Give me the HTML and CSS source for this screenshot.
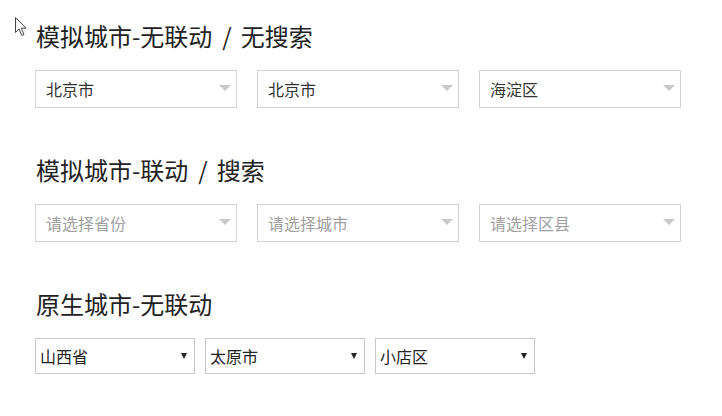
FILE: index.html
```html
<!DOCTYPE html>
<html lang="zh-CN">
<head>
    <meta charset="UTF-8">
    <title>城市选择</title>
    <link rel="stylesheet" href="styles.css">
</head>
<body>

<div class="cursor">
    <svg width="13" height="20" viewBox="0 0 13 20">
        <path d="M0.5 0.5 L0.5 15.5 L4 12 L6.8 18.5 L9 17.5 L6.3 11.2 L11 11.2 Z" fill="#fff" stroke="#444" stroke-width="1" stroke-linejoin="miter"/>
    </svg>
</div>

<div id="page">
    <div class="section">
        <h2 class="section-title">模拟城市-无联动<span class="sep">/</span>无搜索</h2>
        <div class="picker-row">
            <div class="picker"><span class="picker-text">北京市</span><span class="caret"></span></div>
            <div class="picker"><span class="picker-text">北京市</span><span class="caret"></span></div>
            <div class="picker"><span class="picker-text">海淀区</span><span class="caret"></span></div>
        </div>
    </div>

    <div class="section">
        <h2 class="section-title">模拟城市-联动<span class="sep">/</span>搜索</h2>
        <div class="picker-row">
            <div class="picker"><span class="picker-text placeholder">请选择省份</span><span class="caret"></span></div>
            <div class="picker"><span class="picker-text placeholder">请选择城市</span><span class="caret"></span></div>
            <div class="picker"><span class="picker-text placeholder">请选择区县</span><span class="caret"></span></div>
        </div>
    </div>

    <div class="section">
        <h2 class="section-title">原生城市-无联动</h2>
        <div class="native-row">
            <div class="native-select"><span>山西省</span><span class="native-caret"></span></div>
            <div class="native-select"><span>太原市</span><span class="native-caret"></span></div>
            <div class="native-select"><span>小店区</span><span class="native-caret"></span></div>
        </div>
    </div>
</div>

</body>
</html>
```

FILE: styles.css
```css
body {
    margin: 0;
    background-color: #ffffff;
    font-family: "Noto Sans CJK SC", "Noto Sans", sans-serif;
    color: #333;
}
#page {
    padding: 19px 0 0 35px;
}
.section {
    margin-bottom: 45px;
}
.section-title {
    margin: 0 0 17px 1px;
    font-size: 24px;
    line-height: 34px;
    font-weight: normal;
    color: #222;
}
.section-title .sep {
    margin: 0 9px 0 10px;
}

/* fake dropdowns */
.picker-row {
    display: flex;
    gap: 20px;
}
.picker {
    width: 202px;
    height: 38px;
    box-sizing: border-box;
    border: 1px solid #d2d2d2;
    display: flex;
    align-items: center;
    justify-content: space-between;
    padding: 0 5px 0 10px;
    background-color: #fff;
}
.picker-text {
    font-size: 16px;
    color: #333;
}
.picker-text.placeholder {
    color: #a0a0a0;
}
.caret {
    width: 0;
    height: 0;
    border-left: 6px solid transparent;
    border-right: 6px solid transparent;
    border-top: 6px solid #c8c8c8;
    margin-top: -3px;
}

/* native looking selects */
.native-row {
    display: flex;
    gap: 10px;
}
.native-select {
    width: 160px;
    height: 36px;
    box-sizing: border-box;
    border: 1px solid #c8c8c8;
    display: flex;
    align-items: center;
    justify-content: space-between;
    padding: 0 7px 0 4px;
    font-size: 16px;
    color: #222;
}
.native-caret {
    width: 0;
    height: 0;
    border-left: 3.5px solid transparent;
    border-right: 3.5px solid transparent;
    border-top: 6px solid #222;
}

.cursor {
    position: absolute;
    left: 15px;
    top: 17px;
}
```
